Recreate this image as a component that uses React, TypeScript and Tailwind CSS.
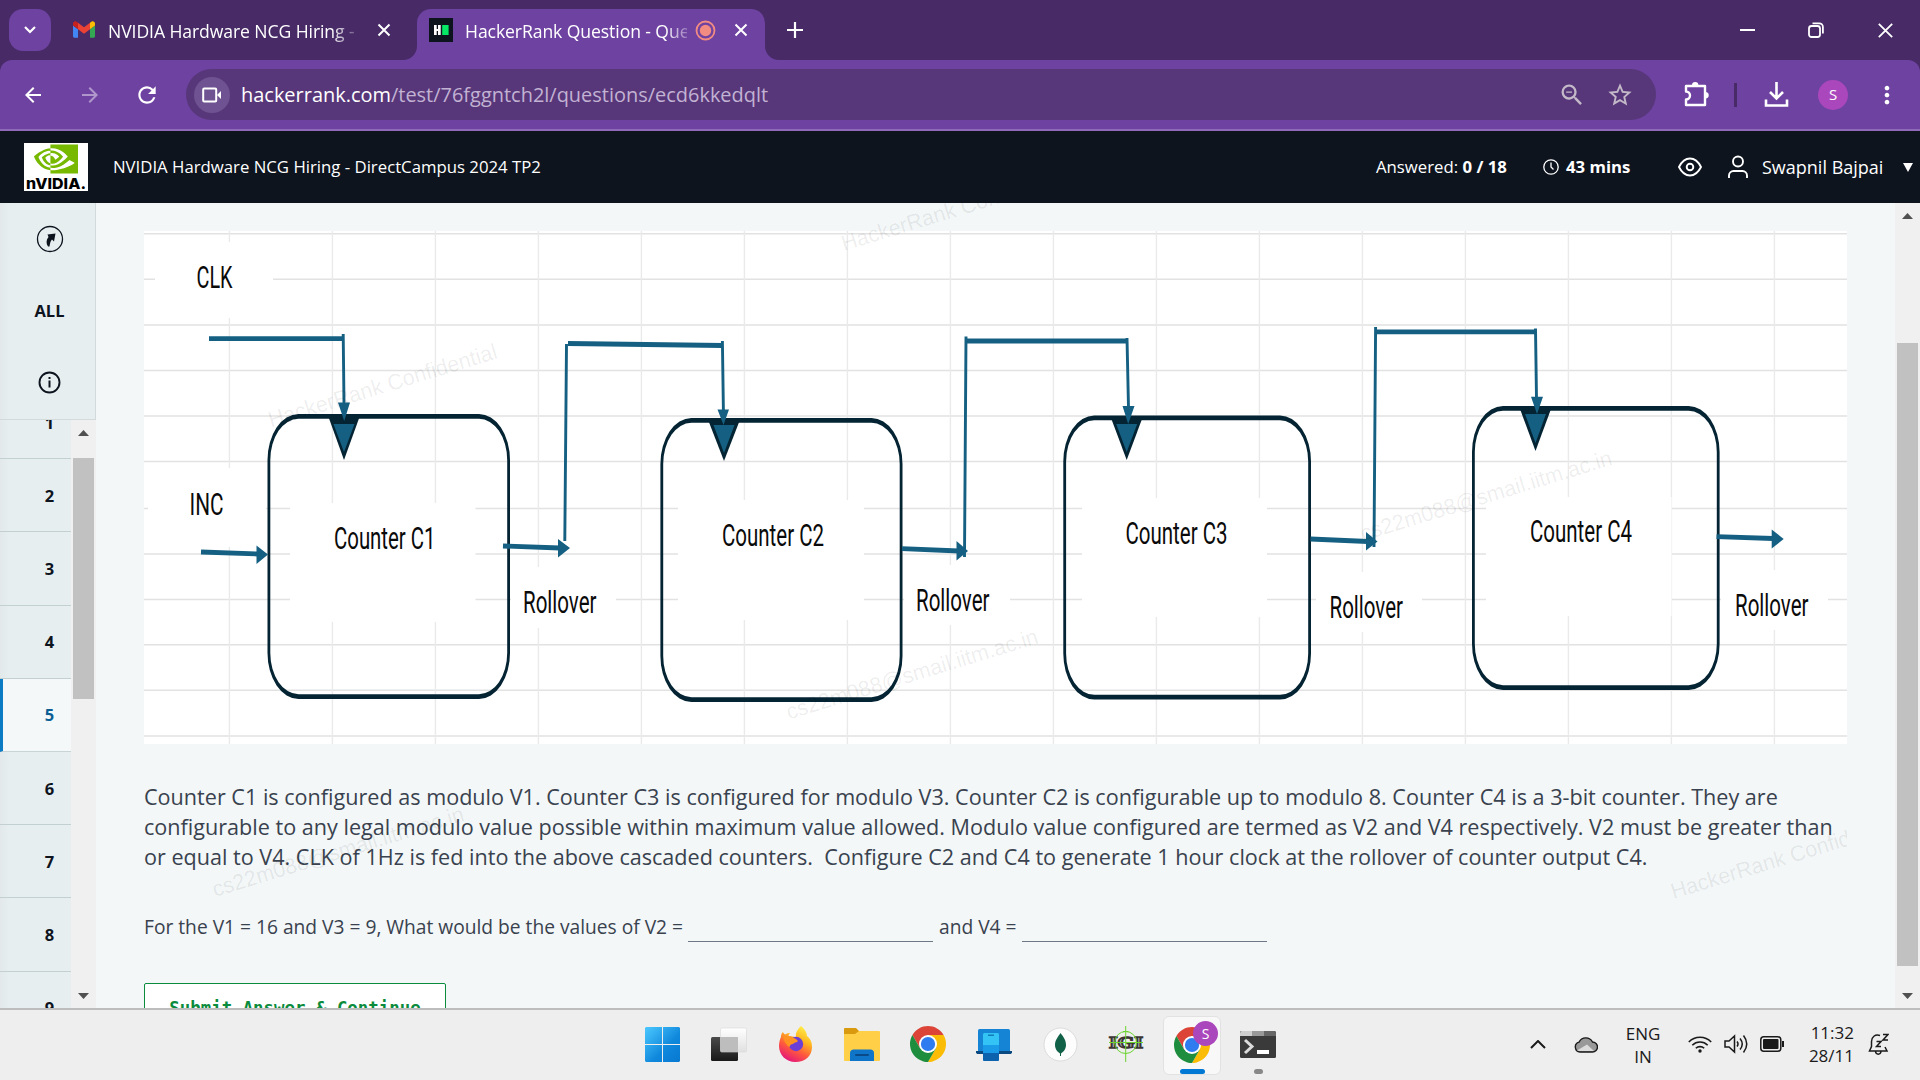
import React from "react";
import { SiNvidia } from "react-icons/si";
import { MdArrowBack, MdArrowForward, MdRefresh, MdZoomOut, MdStarBorder, MdMoreVert } from "react-icons/md";

/* ---------- Browser chrome ---------- */

function GmailIcon() {
  return (
    <svg className="h-[17px] w-[22px]" viewBox="52 42 88 66">
      <path fill="#4285f4" d="M58 108h14V74L52 59v43c0 3.32 2.69 6 6 6" />
      <path fill="#34a853" d="M120 108h14c3.32 0 6-2.69 6-6V59l-20 15" />
      <path fill="#fbbc04" d="M120 48v26l20-15v-8c0-7.42-8.47-11.65-14.4-7.2" />
      <path fill="#ea4335" d="M72 74V48l24 18 24-18v26L96 92" />
      <path fill="#c5221f" d="M52 51v8l20 15V48l-5.6-4.2c-5.94-4.45-14.4-.22-14.4 7.2" />
    </svg>
  );
}

function Cross({ className, w = 2 }: { className: string; w?: number }) {
  return (
    <svg className={className} viewBox="0 0 14 14" stroke="#fff" strokeWidth={w} fill="none">
      <path d="M1.5 1.5l11 11M12.5 1.5l-11 11" />
    </svg>
  );
}

function TabStrip() {
  return (
    <div className="flex h-[60px] items-center bg-[#472a66] text-white">
      <div className="ml-[9px] flex h-[42px] w-[42px] items-center justify-center rounded-[14px] bg-[#6e42a1]">
        <svg className="h-3 w-4" viewBox="0 0 16 12" fill="none" stroke="#fff" strokeWidth="2.2">
          <path d="M3 3l5 5 5-5" />
        </svg>
      </div>
      <div className="ml-[22px] flex w-[344px] items-center">
        <GmailIcon />
        <div className="ml-[13px] w-[254px] overflow-hidden pt-[3px] text-[17.6px] tracking-[-0.09px] whitespace-nowrap [mask-image:linear-gradient(to_right,black_88%,transparent_100%)]">
          NVIDIA Hardware NCG Hiring -
        </div>
        <Cross className="ml-[15px] h-[14px] w-[14px]" />
      </div>
      <div className="relative flex h-[51px] w-[348px] items-center self-end rounded-t-[14px] bg-[#6e42a1] pb-[9px]">
        <svg className="absolute bottom-0 -left-[14px] h-[14px] w-[14px]" viewBox="0 0 14 14">
          <path d="M14 0v14H0A14 14 0 0 0 14 0z" fill="#6e42a1" />
        </svg>
        <svg className="absolute -right-[14px] bottom-0 h-[14px] w-[14px]" viewBox="0 0 14 14">
          <path d="M0 0v14h14A14 14 0 0 1 0 0z" fill="#6e42a1" />
        </svg>
        <svg className="ml-3 h-6 w-6" viewBox="0 0 24 24">
          <rect width="24" height="24" fill="#0e141e" />
          <path d="M5 7h2.7v4H9V7h2.7v10H9v-4H7.7v4H5z" fill="#fff" />
          <rect x="13.2" y="7" width="6.4" height="10" fill="#05e765" />
        </svg>
        <div className="ml-3 w-[222px] overflow-hidden pt-[3px] text-[17.6px] tracking-[-0.09px] whitespace-nowrap [mask-image:linear-gradient(to_right,black_90%,transparent_104%)]">
          HackerRank Question - Que
        </div>
        <svg className="ml-[8px] h-[21px] w-[21px]" viewBox="0 0 21 21" fill="none">
          <circle cx="10.5" cy="10.5" r="9" stroke="#f28b82" strokeWidth="1.8" />
          <circle cx="10.5" cy="10.5" r="5.7" fill="#f28b82" />
        </svg>
        <Cross className="ml-[18px] h-[14px] w-[14px]" />
      </div>
      <svg className="ml-[21px] h-[18px] w-[18px]" viewBox="0 0 18 18" stroke="#fff" strokeWidth="2.2">
        <path d="M9 1v16M1 9h16" />
      </svg>
      <div className="ml-auto flex items-center pr-[26px]">
        <div className="h-[2px] w-[15px] bg-white" />
        <svg className="ml-[53px] h-4 w-4" viewBox="0 0 16 16" fill="none" stroke="#fff" strokeWidth="1.8">
          <rect x="1" y="4" width="11" height="11" rx="2.5" />
          <path d="M4.5 1.3h6.8a3.6 3.6 0 0 1 3.6 3.6v6.5" />
        </svg>
        <Cross className="ml-[53px] h-[17px] w-[17px]" w={1.5} />
      </div>
    </div>
  );
}

function Toolbar() {
  return (
    <div className="h-[71px] border-b-2 border-[#9069b8] bg-[#472a66]">
      <div className="flex h-[69px] items-center rounded-t-[12px] bg-[#6e42a1] text-white">
        <MdArrowBack className="ml-[21px] h-6 w-6" />
        <MdArrowForward className="ml-[33px] h-6 w-6 opacity-45" />
        <MdRefresh className="ml-[32px] h-[26px] w-[26px]" />
        <div className="ml-[26px] flex h-[51px] w-[1470px] items-center rounded-full bg-[#573779]">
          <div className="ml-[8px] flex h-9 w-9 items-center justify-center rounded-full bg-[#6f5291]">
            <svg className="h-[16px] w-[20px]" viewBox="0 0 20 16" fill="none" stroke="#fff" strokeWidth="2">
              <rect x="1.2" y="1.5" width="13" height="13" rx="1" />
              <path d="M15 8l4-4v8z" fill="#fff" stroke="none" />
            </svg>
          </div>
          <div className="ml-[11px] text-[19.970px] whitespace-nowrap">
            hackerrank.com<span className="text-[#c2b2d3]">/test/76fggntch2l/questions/ecd6kkedqlt</span>
          </div>
          <MdZoomOut className="ml-auto h-7 w-7 text-[#c3b9c8]" />
          <MdStarBorder className="mr-[22px] ml-[20px] h-7 w-7 text-[#c3b9c8]" />
        </div>
        <svg className="ml-[28px] h-[27px] w-[26px]" viewBox="0 0 26 27" fill="none" stroke="#fff" strokeWidth="2.4" strokeLinejoin="round">
          <path d="M2 5h19v19H2v-5.500a4 4 0 0 0 0-8z" />
          <path d="M8 4.200a3.200 3.200 0 0 1 6.400 0zM22 11a3.300 3.300 0 0 1 0 6.500z" fill="#fff" stroke="none" />
        </svg>
        <div className="ml-[24px] h-6 w-[3px] bg-[#472a66]" />
        <svg className="ml-[27px] h-[27px] w-[25px]" viewBox="0 0 25 27" fill="none" stroke="#fff" strokeWidth="2.6">
          <path d="M12.500 1v16M6 11l6.500 6.500L19 11M2 18.500v6h21v-6" />
        </svg>
        <div className="ml-[29px] flex h-[30px] w-[30px] items-center justify-center rounded-full bg-[#ab47bc] text-[15px]">S</div>
        <MdMoreVert className="ml-[25px] h-[28px] w-[28px]" />
      </div>
    </div>
  );
}

/* ---------- Test page ---------- */

function TestHeader() {
  return (
    <header className="flex h-[72px] shrink-0 items-center bg-[#0d141e] text-[16.750px] whitespace-nowrap text-white">
      <div className="ml-6 flex h-12 w-16 flex-col items-center bg-white">
        <SiNvidia className="-mt-[6px] h-[44px] w-[44px] shrink-0 text-[#76b900]" />
        <svg className="-mt-[5px] h-[15px] w-[62px] shrink-0 overflow-visible" viewBox="0 0 62 15">
          <text x="1" y="13" fontFamily="Inter" fontWeight="800" fontSize="15" textLength="60" lengthAdjust="spacingAndGlyphs">
            nVIDIA.
          </text>
        </svg>
      </div>
      <div className="ml-[25px]">NVIDIA Hardware NCG Hiring - DirectCampus 2024 TP2</div>
      <div className="ml-auto w-[167px]">
        Answered: <b>0 / 18</b>
      </div>
      <svg className="h-4 w-4" viewBox="0 0 16 16" fill="none" stroke="#fff" strokeWidth="1.300">
        <circle cx="8" cy="8" r="7.200" />
        <path d="M8 3.500V8l2.500 2.500" />
      </svg>
      <b className="ml-[7px] w-[112px]">43 mins</b>
      <svg className="h-5 w-6" viewBox="0 0 24 20" fill="none" stroke="#fff" strokeWidth="1.900">
        <path d="M1 10c3-6 7-8.500 11-8.500S20 4 23 10c-3 6-7 8.500-11 8.500S4 16 1 10z" />
        <circle cx="12" cy="10" r="3.300" />
      </svg>
      <svg className="ml-[26px] h-6 w-5" viewBox="0 0 20 24" fill="none" stroke="#fff" strokeWidth="1.900">
        <circle cx="10" cy="6.500" r="5" />
        <path d="M1 23v-2.500a4.500 4.500 0 0 1 4.500-4.500h9a4.500 4.500 0 0 1 4.500 4.500V23" />
      </svg>
      <div className="ml-[14px] w-[141px] text-[18px]">Swapnil Bajpai</div>
      <svg className="mr-[7px] h-[9px] w-[10px]" viewBox="0 0 10 9">
        <path d="M0 0h10L5 9z" fill="#fff" />
      </svg>
    </header>
  );
}

function Arrow({ down = false }: { down?: boolean }) {
  return (
    <svg className="h-[6px] w-[11px] shrink-0" viewBox="0 0 11 6">
      <path d={down ? "M0 0h11L5.500 6z" : "M0 6h11L5.500 0z"} fill="#505050" />
    </svg>
  );
}

function Sidebar() {
  return (
    <aside className="flex h-full w-24 shrink-0 flex-col bg-linear-to-r from-[#e3e9eb] to-[#e6eef0] to-10% text-[16.500px] font-bold text-[#0e141e]">
      <div className="flex h-[217px] shrink-0 flex-col items-center border-r border-b border-[#d3dadb] pl-[4px]">
        <svg className="mt-[22px] h-7 w-7" viewBox="0 0 28 28">
          <circle cx="14" cy="14" r="12.500" fill="none" stroke="#0e141e" strokeWidth="1.300" />
          <path d="M11.500 9.500l8-1-1.500 8-2-2c-1.500 1.500-2 3.500-2.500 7h-1.500c-2-3-2-6.500.5-9.500z" fill="#0e141e" />
        </svg>
        <div className="mt-[46px] leading-6">ALL</div>
        <svg className="mt-[48px] h-[23px] w-[23px]" viewBox="0 0 23 23">
          <circle cx="11.500" cy="11.500" r="10" fill="none" stroke="#0e141e" strokeWidth="1.900" />
          <path d="M10.500 6h2v2h-2zM10.500 9.500h2v7h-2z" fill="#0e141e" />
        </svg>
      </div>
      <div className="flex min-h-0 flex-1">
        <div className="w-[71px] overflow-hidden">
          <div className="-mt-[34px]">
            {[1, 2, 3, 4, 5, 6, 7, 8, 9].map((n) => (
              <div
                key={n}
                className={
                  n === 5
                    ? "flex h-[73.200px] items-center justify-center border-b border-l-[3px] border-b-[#c8d4d6] border-l-[#0b7bc4] bg-[#f4f8f8] pt-[2px] pl-[25px] text-[#0c5f94]"
                    : "flex h-[73.200px] items-center justify-center border-b border-[#c3d0d2] pt-[2px] pl-[28px]"
                }
              >
                {n}
              </div>
            ))}
          </div>
        </div>
        <div className="flex w-[25px] flex-col items-center bg-[#f0f0f0] pt-[10px] pb-[9px]">
          <Arrow />
          <div className="mt-[22px] h-[241px] w-[21px] shrink-0 bg-[#c1c1c1]" />
          <div className="mt-auto flex">
            <Arrow down />
          </div>
        </div>
      </div>
    </aside>
  );
}

const DARK = "#042433";
const BLUE = "#156082";

const boxes = [
  { x: 267.5, y: 414, r: 510, b: 699, tx: 344, ty: 424, tip: 460 },
  { x: 660.4, y: 418, r: 902.5, b: 702, tx: 724, ty: 425, tip: 461 },
  { x: 1063.3, y: 415.5, r: 1311, b: 699.6, tx: 1126.7, ty: 424, tip: 460 },
  { x: 1472, y: 406, r: 1719.6, b: 690, tx: 1535.5, ty: 414, tip: 451 },
];

const blanks = [
  [155, 242, 118, 76], [148, 468, 118, 79], [290, 503, 185.500, 119], [678, 500, 186, 120],
  [1082, 498, 185, 119], [1486, 497, 185.500, 119], [511, 567, 105, 61], [904, 565, 106, 60],
  [1316, 572, 106, 60], [1721, 570, 107, 60],
];

/* text, left edge, baseline, drawn width */
const labels: [string, number, number, number][] = [
  ["CLK", 196.5, 287.5, 36], ["INC", 189.5, 515, 34], ["Counter C1", 334, 548.5, 101.500],
  ["Counter C2", 722, 546, 102], ["Counter C3", 1125.500, 543.700, 102], ["Counter C4", 1530, 542.300, 102],
  ["Rollover", 523, 613, 73.500], ["Rollover", 916, 610.700, 73.500], ["Rollover", 1329.500, 618, 73.500], ["Rollover", 1735, 615.700, 73.500],
];

const hLines = [233.7, 279.3, 325, 370.5, 416, 461.5, 508.5, 554, 599.5, 644.7, 690.3, 736];

/* Ring with elliptical corners: thicker horizontally running edges than vertical ones */
function ring(x: number, y: number, r: number, b: number) {
  const one = (l: number, t: number, rr: number, bb: number, rx: number, ry: number) =>
    `M${l + rx} ${t}H${rr - rx}A${rx} ${ry} 0 0 1 ${rr} ${t + ry}V${bb - ry}A${rx} ${ry} 0 0 1 ${rr - rx} ${bb}H${l + rx}A${rx} ${ry} 0 0 1 ${l} ${bb - ry}V${t + ry}A${rx} ${ry} 0 0 1 ${l + rx} ${t}z`;
  return one(x, y, r, b, 31, 46) + one(x + 2.8, y + 4.8, r - 2.8, b - 4.8, 28.2, 41.2);
}

function Diagram() {
  return (
    <svg className="block h-[513px] w-[1703px] bg-white" viewBox="144 231 1703 513">
      <g stroke="#e2e2e2" strokeWidth="1.400">
        {hLines.map((y) => (
          <line key={y} x1="144" x2="1847" y1={y} y2={y} />
        ))}
        {Array.from({ length: 16 }, (_, i) => 229.400 + i * 103).map((x) => (
          <line key={x} x1={x} x2={x} y1="231" y2="744" stroke="#eaeaea" />
        ))}
      </g>
      {blanks.map(([x, y, w, h]) => (
        <rect key={x} x={x} y={y} width={w} height={h} fill="#fff" />
      ))}
      {boxes.map((k) => (
        <g key={k.x}>
          <path d={ring(k.x, k.y, k.r, k.b)} fill={DARK} fillRule="evenodd" />
          <path d={`M${k.tx - 15.5} ${k.y + 3}h31L${k.tx} ${k.tip}z`} fill={DARK} />
          <path d={`M${k.tx - 10.5} ${k.ty}h21L${k.tx} ${k.tip - 8}z`} fill={BLUE} />
        </g>
      ))}
      <g stroke={BLUE} strokeWidth="2.900">
        <path d="M343.200 334L344 404M564.800 541L566.500 344M722.400 341L723.400 411M964.500 557L966 336.500M1127 338L1128.500 408M1374 547L1375.600 327M1535.500 328.500L1536.500 399" />
        <path d="M209 338.700H343M568 343.500L723 345.500M966 341H1127M1376 331.800H1536M201 552L258 554M503 546L560 548M902 548.700L959 551M1310.500 539L1368 541.500M1716.500 536.700L1773 538.500" strokeWidth="4.800" />
      </g>
      <g fill={BLUE}>
        <path d="M338 402.500h12L344.200 421zM717.500 409.500h11.500L723.500 425zM1122.500 406h12L1128.200 424zM1531 396.700h12L1537 414z" />
        <path d="M256.500 545.500v18.500l11.500-9.500zM558 539v18.500l12-9.500zM956.500 541v19.500l11.500-9.500zM1366 532v18.500l11.500-9zM1771.700 529.500v19l12-9.500z" />
      </g>
      <g fontFamily="Roboto, 'Open Sans', sans-serif" fontSize="32" fill="#0a0a0a">
        {labels.map(([t, x, y, w]) => (
          <text key={x} x={x} y={y} textLength={w} lengthAdjust="spacingAndGlyphs">
            {t}
          </text>
        ))}
      </g>
    </svg>
  );
}

const marks: [string, number, number, number][] = [
  ["HackerRank Confidential", 271, 427.5, 238], ["HackerRank Confidential", 844, 251, 238],
  ["HackerRank Confidential", 1673.500, 899, 238], ["cs22m088@smail.iitm.ac.in", 789, 719.500, 262],
  ["cs22m088@smail.iitm.ac.in", 215, 897, 262], ["cs22m088@smail.iitm.ac.in", 1363, 541, 262],
];

function Watermarks() {
  return (
    <svg className="pointer-events-none absolute top-0 left-12 h-[805px] w-[1703px]" viewBox="144 203 1703 805">
      <g fontFamily="'Liberation Sans', sans-serif" fontSize="22" fill="#000" fillOpacity="0.080" stroke="#000" strokeOpacity="0.035" strokeWidth="0.600">
        {marks.map(([t, x, y, w]) => (
          <text key={`${x}`} transform={`translate(${x} ${y}) rotate(-17)`} textLength={w} lengthAdjust="spacingAndGlyphs">
            {t}
          </text>
        ))}
      </g>
    </svg>
  );
}

function Question() {
  return (
    <main className="relative h-full min-w-0 flex-1 overflow-hidden bg-[#f3f7f8] pt-[28px] pl-12 text-[#39424e]">
      <Diagram />
      <div className="mt-[38px] text-[21.600px] leading-[30px] whitespace-nowrap">
        <p>Counter C1 is configured as modulo V1. Counter C3 is configured for modulo V3. Counter C2 is configurable up to modulo 8. Counter C4 is a 3-bit counter. They are</p>
        <p>configurable to any legal modulo value possible within maximum value allowed. Modulo value configured are termed as V2 and V4 respectively. V2 must be greater than</p>
        <p>or equal to V4. CLK of 1Hz is fed into the above cascaded counters.&nbsp; Configure C2 and C4 to generate 1 hour clock at the rollover of counter output C4.</p>
      </div>
      <div className="mt-[40px] flex h-[30px] items-center text-[19.200px] whitespace-nowrap">
        <span className="w-[544px]">For the V1 = 16 and V3 = 9, What would be the values of V2 =</span>
        <span className="h-[30px] w-[245px] border-b border-[#6d7a86]" />
        <span className="ml-[6px] w-[83px]">and V4 =</span>
        <span className="h-[30px] w-[245px] border-b border-[#6d7a86]" />
      </div>
      <div className="mt-[41px] flex h-[50px] w-[302px] items-center justify-center rounded-[2px] border-[1.500px] border-[#0b8b3c] bg-white font-['DejaVu_Sans_Mono',monospace] text-[17.400px] font-bold text-[#0b8b3c]">
        Submit Answer &amp; Continue
      </div>
      <Watermarks />
    </main>
  );
}

/* ---------- Taskbar ---------- */

function ChromeLogo({ className }: { className: string }) {
  return (
    <svg className={className} viewBox="2 2 44 44">
      <path d="M4.950 13A22 22 0 0 1 43.050 13H24L14.470 29.500z" fill="#db4437" />
      <path d="M43.050 13A22 22 0 0 1 24 46L33.530 29.500 24 13z" fill="#fbbc05" />
      <path d="M24 46A22 22 0 0 1 4.950 13L14.470 29.500H33.530z" fill="#1e8e3e" />
      <circle cx="24" cy="24" r="11" fill="#fff" />
      <circle cx="24" cy="24" r="8.700" fill="#2f7bf0" />
    </svg>
  );
}

function Tile({ children }: { children: React.ReactNode }) {
  return <div className="flex h-[60px] w-[66.250px] items-center justify-center">{children}</div>;
}

function Taskbar() {
  return (
    <footer className="flex h-[72px] shrink-0 border-t-2 border-[#bdbdbd] bg-[#eeeeee] text-[#1a1a1a]">
      <div className="ml-[629px] flex h-[68px] items-center">
        <Tile>
          <svg className="h-[35px] w-[35px]" viewBox="0 0 35 35">
            <defs>
              <linearGradient id="win" gradientUnits="userSpaceOnUse" x1="0" y1="0" x2="35" y2="35">
                <stop offset="0" stopColor="#4cc8ff" />
                <stop offset="0.600" stopColor="#0f88dc" />
                <stop offset="1" stopColor="#0778d0" />
              </linearGradient>
            </defs>
            <path d="M1 0h16v17H0V1zM18 0h16l1 1v16H18zM0 18h17v17H1l-1-1zM18 18h17v16l-1 1H18z" fill="url(#win)" />
          </svg>
        </Tile>
        <Tile>
          <svg className="ml-[3px] h-[35px] w-[37px]" viewBox="0 0 37 35">
            <defs>
              <linearGradient id="tvd" x1="0" y1="0" x2="0" y2="1">
                <stop offset="0" stopColor="#4a4a4a" />
                <stop offset="1" stopColor="#191919" />
              </linearGradient>
              <linearGradient id="tvl" x1="0" y1="0" x2="0" y2="1">
                <stop offset="0" stopColor="#ffffff" />
                <stop offset="1" stopColor="#e0e0e0" />
              </linearGradient>
            </defs>
            <rect x="0" y="10" width="27" height="24" rx="1.500" fill="url(#tvd)" />
            <rect x="9.500" y="1" width="26" height="24" rx="1.500" fill="url(#tvl)" stroke="#d6d6d6" strokeWidth="0.600" />
            <path d="M9.500 10H27v15H11a1.500 1.500 0 0 1-1.500-1.500z" fill="#bdbdbd" />
          </svg>
        </Tile>
        <Tile>
          <svg className="ml-[2px] h-[36px] w-[35px]" viewBox="0 0 35 36">
            <defs>
              <linearGradient id="fox" x1="0.800" y1="0" x2="0.300" y2="1">
                <stop offset="0" stopColor="#fff44f" />
                <stop offset="0.350" stopColor="#ffb81f" />
                <stop offset="0.650" stopColor="#ff5a3c" />
                <stop offset="1" stopColor="#e3147c" />
              </linearGradient>
            </defs>
            <path d="M23 0c5 4 6 8 6 10 4 3 5 7 5 11 0 9-7 15-16.500 15S1 29 1 20c0-4 1-7 2-9 0-2 .5-4 2-5 .3 1 1 2 2 2.500 2-1.500 4-1.500 5-1.500-1 1-1.500 2-1.500 3L18 11c-1-5 3-9 5-11z" fill="url(#fox)" />
            <circle cx="18" cy="18" r="7.200" fill="#6b3fd6" />
            <path d="M5 7l3 4 4-1 6 3 2 2c-1 1.500-4 1.500-5 3-2 0-3 1-3.500 3C9 20 5 15 5 7z" fill="#ff9220" />
          </svg>
        </Tile>
        <Tile>
          <svg className="ml-[2px] h-[34px] w-[36px]" viewBox="0 0 36 34">
            <path d="M1 1h11l4 4-4 4H0V2a1 1 0 0 1 1-1z" fill="#d99a10" />
            <path d="M0 7h11l4-3h20a1 1 0 0 1 1 1v28a1 1 0 0 1-1 1H1a1 1 0 0 1-1-1z" fill="#ffcf48" />
            <path d="M6 34V26c0-2 1.500-3.500 3.500-3.500h17c2 0 3.500 1.500 3.500 3.500v8z" fill="#0f75c8" />
            <rect x="11" y="27" width="14" height="2" rx="1" fill="#0a4a89" />
          </svg>
        </Tile>
        <Tile>
          <ChromeLogo className="ml-[1px] h-9 w-9" />
        </Tile>
        <Tile>
          <svg className="ml-[1px] h-[34px] w-[36px]" viewBox="0 0 36 34">
            <rect x="2" y="2" width="32" height="23" rx="1.500" fill="#1584d4" />
            <path d="M0 24h36v1.500L35 27H1l-1-1.500z" fill="#0b4a80" />
            <rect x="7" y="6" width="16" height="28" rx="1.500" fill="#1a9be8" />
            <path d="M7 18V7.500A1.500 1.500 0 0 1 8.500 6h13A1.500 1.500 0 0 1 23 7.500V18z" fill="#33c4f5" />
            <path d="M7 26h16v6.500a1.500 1.500 0 0 1-1.500 1.500h-13A1.500 1.500 0 0 1 7 32.500z" fill="#0c62ad" />
            <rect x="12" y="7.500" width="6" height="1.500" fill="#107cb8" />
          </svg>
        </Tile>
        <Tile>
          <svg className="ml-[1px] h-[35px] w-[35px]" viewBox="0 0 35 35">
            <circle cx="17.500" cy="17.500" r="16.500" fill="#fdfdfd" stroke="#dcdcdc" />
            <path d="M17.500 6c3 4 5.500 7 5.500 12 0 4-2.500 7-5 8.500V29h-1v-2.500C14.500 25 12 22 12 18c0-5 3-8 5.500-12z" fill="#116149" />
          </svg>
        </Tile>
        <Tile>
          <svg className="h-[36px] w-[36px]" viewBox="0 0 36 36">
            <text x="1" y="22" fontFamily="'Liberation Serif', serif" fontWeight="700" fontSize="16" fill="#b0aeae" stroke="#3a3535" strokeWidth="1.500" textLength="34" lengthAdjust="spacingAndGlyphs">
              IGI
            </text>
            <path d="M17.700 0v36M1 16.500h34M15 5.500h5.500" stroke="#6bd42f" strokeWidth="1" />
            <circle cx="17.700" cy="16.500" r="11" fill="none" stroke="#6bd42f" strokeWidth="1" />
          </svg>
        </Tile>
        <Tile>
          <div className="relative mt-[3px] flex h-[59px] w-[58px] items-center justify-center rounded-[6px] border border-[#e2e2e2] bg-[#f8f8f8]">
            <ChromeLogo className="mb-[1px] h-9 w-9" />
            <div className="absolute top-[4px] right-[2px] flex h-[25px] w-[25px] items-center justify-center rounded-full bg-[#ab47bc] text-[14px] text-white">S</div>
            <div className="absolute bottom-0 left-[16px] h-[5px] w-[25px] rounded-full bg-[#0078d4]" />
          </div>
        </Tile>
        <Tile>
          <div className="relative flex">
            <svg className="h-[27px] w-[36px]" viewBox="0 0 36 27">
              <rect width="36" height="27" rx="1.500" fill="#3a3a3a" />
              <path d="M1.500 0H12v5H0V1.500z" fill="#cfcfcf" />
              <path d="M12 0h12v5H12z" fill="#999" />
              <path d="M24 0h10.500L36 1.500V5H24z" fill="#666" />
              <path d="M5 9l7 6.500L5 22" fill="none" stroke="#dcdcdc" strokeWidth="3" />
              <rect x="17" y="19" width="12" height="4" fill="#fff" />
            </svg>
            <div className="absolute top-[38px] left-[14px] h-[5px] w-[9px] rounded-full bg-[#888]" />
          </div>
        </Tile>
      </div>
      <div className="ml-auto flex h-[68px] items-center text-[17px] leading-[23px]">
        <svg className="h-[9px] w-4" viewBox="0 0 16 9" fill="none" stroke="#1a1a1a" strokeWidth="2">
          <path d="M1 8l7-7 7 7" />
        </svg>
        <svg className="ml-[28px] h-[17px] w-6" viewBox="0 0 24 17">
          <path d="M6 16a5 5 0 0 1-1-9.800A7.500 7.500 0 0 1 18.500 6 5 5 0 0 1 18.500 16z" fill="#999" stroke="#1a1a1a" strokeWidth="1.400" />
          <path d="M3 14.500l10-6 7 6.500H6z" fill="#dcdcdc" />
        </svg>
        <div className="ml-[22px] w-[46px] pt-[2px] text-center">
          ENG
          <br />
          IN
        </div>
        <svg className="ml-[22px] h-[18px] w-6" viewBox="0 0 24 18" fill="none" stroke="#1a1a1a" strokeWidth="1.600">
          <path d="M.8 7a15.500 15.500 0 0 1 22.400 0M4.300 10.300a10.800 10.800 0 0 1 15.400 0M7.800 13.300a6 6 0 0 1 8.400 0" />
          <circle cx="12" cy="16" r="1.700" fill="#1a1a1a" stroke="none" />
        </svg>
        <svg className="ml-[12px] h-5 w-6" viewBox="0 0 24 20" fill="none" stroke="#1a1a1a" strokeWidth="1.500">
          <path d="M1 7h4l5.500-5v16L5 13H1zM13 7.500q2 2.500 0 5M16 4.500q4.500 5.500 0 11M19.500 1.500q6.500 8.500 0 17" />
        </svg>
        <svg className="ml-[12px] h-4 w-6" viewBox="0 0 24 16">
          <rect x="0.800" y="0.800" width="20" height="14.400" rx="3" fill="none" stroke="#1a1a1a" strokeWidth="1.500" />
          <rect x="3" y="3" width="15.500" height="10" rx="1" fill="#1a1a1a" />
          <path d="M22 5h2v6h-2z" fill="#1a1a1a" />
        </svg>
        <div className="ml-[19px] w-[51px] text-right text-[17px]">
          11:32
          <br />
          28/11
        </div>
        <svg className="mr-[31px] ml-[14px] h-[22px] w-[21px]" viewBox="0 0 21 22" fill="none" stroke="#1a1a1a" strokeWidth="1.500">
          <path d="M12 2.500C7 1 3.500 4 3.500 8.500v5L1.500 18H19l-2-4M7.500 18.500c.5 3.500 5 3.500 5.500 0M8.500 8.500h4.500l-4.500 5h4.500M15 1.500h5l-5 5.500h5" />
        </svg>
      </div>
    </footer>
  );
}

export default function App() {
  return (
    <div className="flex h-[1080px] w-[1920px] flex-col overflow-hidden bg-white font-['Open_Sans',sans-serif]">
      <TabStrip />
      <Toolbar />
      <TestHeader />
      <div className="flex h-[805px] shrink-0">
        <Sidebar />
        <Question />
        <div className="flex w-[25px] shrink-0 flex-col items-center bg-[#f0f0f0] pt-[10px] pb-[9px]">
          <Arrow />
          <div className="mt-[124px] h-[623px] w-[21px] shrink-0 bg-[#c1c1c1]" />
          <div className="mt-auto flex">
            <Arrow down />
          </div>
        </div>
      </div>
      <Taskbar />
    </div>
  );
}
